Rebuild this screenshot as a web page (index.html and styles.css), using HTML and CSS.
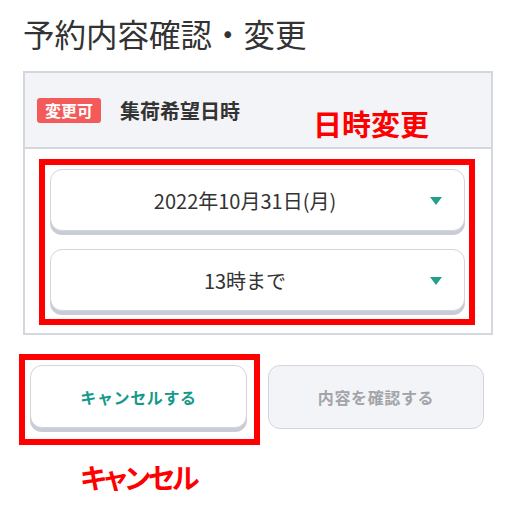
FILE: index.html
```html
<!DOCTYPE html>
<html lang="ja">
<head>
<meta charset="utf-8">
<title>予約内容確認・変更</title>
<link rel="stylesheet" href="styles.css">
</head>
<body>
<div class="page">
  <h1 class="title">予約内容確認・変更</h1>
  <section class="card">
    <div class="card-head">
      <span class="badge">変更可</span>
      <span class="head-label">集荷希望日時</span>
    </div>
    <span class="note note-date">日時変更</span>
    <div class="card-body">
      <div class="mark-box">
        <div class="select">
          <span class="select-text">2022年10月31日(月)</span>
          <svg class="caret" width="12" height="8" viewBox="0 0 12 8"><polygon points="0,0 12,0 6,8" fill="#22a08c"/></svg>
        </div>
        <div class="select">
          <span class="select-text">13時まで</span>
          <svg class="caret" width="12" height="8" viewBox="0 0 12 8"><polygon points="0,0 12,0 6,8" fill="#22a08c"/></svg>
        </div>
      </div>
    </div>
  </section>
  <div class="actions">
    <div class="cancel-col">
      <div class="mark-btn">
        <button class="btn btn-cancel">キャンセルする</button>
      </div>
      <span class="note note-cancel">キャンセル</span>
    </div>
    <button class="btn btn-confirm">内容を確認する</button>
  </div>
</div>
</body>
</html>
```

FILE: styles.css
```css
* { box-sizing: border-box; }
html, body { margin: 0; padding: 0; background: #fff; }
body {
  font-family: "Noto Sans CJK JP", "Noto Sans", sans-serif;
  color: #333;
}
.page { width: 517px; }
.title {
  margin: 0 0 18px 23px;
  padding-top: 13px;
  font-size: 31.5px;
  line-height: 40px;
  font-weight: 400;
  color: #333;
}
.card {
  position: relative;
  margin-left: 23px;
  width: 470px;
  border: 2px solid #d5d7df;
}
.card-head {
  height: 76px;
  display: flex;
  align-items: center;
  padding-left: 12px;
  background: #f3f4f7;
  border-bottom: 2px solid #d5d7df;
}
.badge {
  display: inline-block;
  height: 25px;
  line-height: 25px;
  padding: 0 8px;
  background: #f45a5a;
  color: #fff;
  font-size: 16px;
  font-weight: 700;
  border-radius: 3px;
}
.head-label {
  margin-left: 19px;
  font-size: 20px;
  font-weight: 700;
  color: #333;
}
.note {
  color: #ff0000;
  font-size: 28px;
  line-height: 28px;
  font-weight: 700;
}
.note-date {
  position: absolute;
  left: 288px;
  top: 36px;
  font-size: 29px;
}
.card-body {
  padding: 10px 16px 8px 14px;
}
.mark-box {
  border: 6px solid #ff0000;
  padding: 4px 4px 8px 5px;
  display: flex;
  flex-direction: column;
  gap: 18px;
}
.select {
  position: relative;
  height: 62px;
  border: 1px solid #d3d5dd;
  border-radius: 12px;
  background: #fff;
  box-shadow: 0 4px 0 #c9cbd5;
  display: flex;
  align-items: center;
  justify-content: center;
  padding-right: 25px;
}
.select-text {
  font-size: 20px;
  color: #333;
}
.caret {
  position: absolute;
  right: 22px;
  top: 27px;
}
.actions {
  display: flex;
  align-items: flex-start;
  gap: 8px;
  padding-left: 19px;
  margin-top: 19px;
}
.cancel-col {
  display: flex;
  flex-direction: column;
  align-items: center;
}
.mark-btn {
  border: 6px solid #ff0000;
  padding: 5px 7px 11px 5px;
}
.btn {
  display: flex;
  align-items: center;
  justify-content: center;
  width: 217px;
  height: 63px;
  border: 1px solid #d3d5dd;
  border-radius: 12px;
  font-family: "Noto Sans CJK JP", "Noto Sans", sans-serif;
  font-size: 16px;
  font-weight: 700;
  letter-spacing: 0.04em;
  padding: 0;
}
.btn-cancel {
  background: #fff;
  color: #16998a;
  box-shadow: 0 4px 0 #c9cbd5;
}
.btn-confirm {
  width: 216px;
  height: 64px;
  margin-top: 11px;
  background: #f3f4f7;
  color: #a2a4aa;
}
.note-cancel {
  margin-top: 18px;
  letter-spacing: -2.5px;
  font-feature-settings: "palt";
  padding-right: 2px;
}
```
